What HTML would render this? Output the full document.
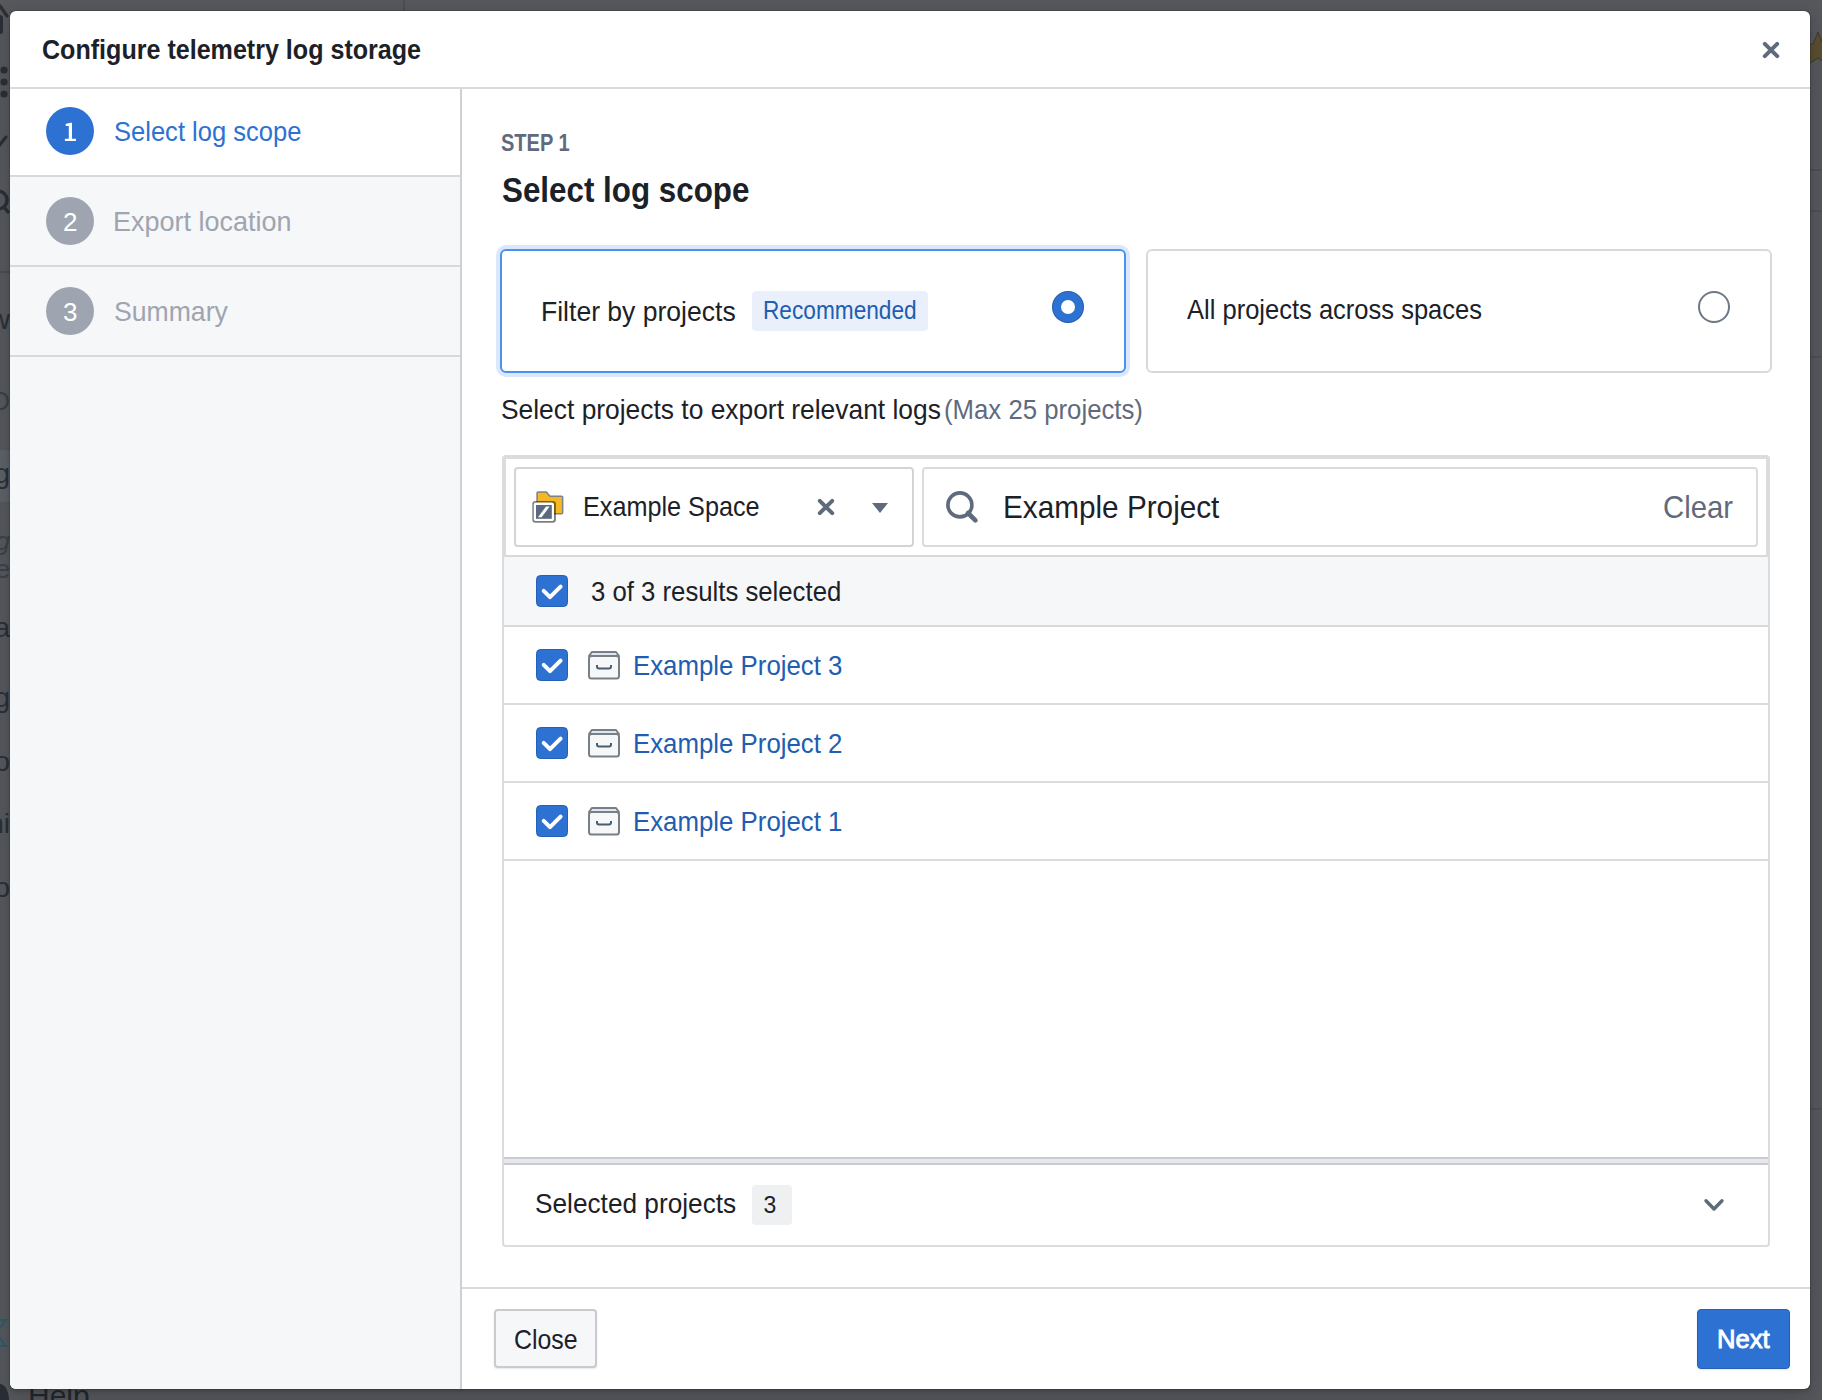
<!DOCTYPE html>
<html>
<head>
<meta charset="utf-8">
<style>
html,body{margin:0;padding:0;}
body{width:1822px;height:1400px;overflow:hidden;background:#56585c;position:relative;font-family:"Liberation Sans",sans-serif;}
.a{position:absolute;box-sizing:border-box;}
.t{position:absolute;white-space:nowrap;font-family:"Liberation Sans",sans-serif;}
svg{position:absolute;overflow:visible;}
</style>
</head>
<body>
<!-- backdrop hints -->
<div class="a" style="left:403px;top:0;width:2px;height:11px;background:#4c4e52"></div>
<div class="a" style="left:1810px;top:169px;width:12px;height:2px;background:#4d4f53"></div>
<div class="a" style="left:1810px;top:210px;width:12px;height:2px;background:#4d4f53"></div>
<div class="a" style="left:1810px;top:356px;width:12px;height:2px;background:#4d4f53"></div>
<div class="a" style="left:1810px;top:1108px;width:12px;height:2px;background:#4d4f53"></div>
<svg style="left:1798px;top:30px" width="40" height="36" viewBox="0 0 40 36"><path d="M20 2L25 14L38 15L28 23L31 35L20 28L9 35L12 23L2 15L15 14Z" fill="#5a4e30" stroke="#3e3829" stroke-width="1"/></svg>
<div class="a" style="left:0;top:271px;width:10px;height:2px;background:#4a4c50"></div>
<div class="a" style="left:0;top:450px;width:10px;height:52px;background:#5d6168"></div>
<svg style="left:-12px;top:0" width="22" height="240" viewBox="0 0 22 240">
 <rect x="0" y="15" width="15" height="19" rx="3" fill="#2b2f36"/><path d="M12 6L19 16" stroke="#2b2f36" stroke-width="3.2" stroke-linecap="round"/>
 <circle cx="16" cy="70" r="3.6" fill="#2b2f36"/><circle cx="16" cy="82" r="3.6" fill="#2b2f36"/><circle cx="16" cy="94" r="3.6" fill="#2b2f36"/>
 <path d="M10 147L18 137" stroke="#2b2f36" stroke-width="3" stroke-linecap="round"/>
 <circle cx="10" cy="200" r="9" stroke="#2b2f36" stroke-width="3.5" fill="none"/><path d="M16 207L20 212" stroke="#2b2f36" stroke-width="3.5" stroke-linecap="round"/>
</svg>
<div class="t" style="right:1812px;top:306px;font-size:28px;line-height:28px;color:#2b2f36">ow</div>
<div class="t" style="right:1812px;top:388px;font-size:26px;line-height:26px;color:#3b3f46">RO</div>
<div class="t" style="right:1812px;top:460px;font-size:28px;line-height:28px;color:#2b2f36">og</div>
<div class="t" style="right:1812px;top:528px;font-size:26px;line-height:26px;color:#3d4148;font-style:italic">ag</div>
<div class="t" style="right:1812px;top:556px;font-size:26px;line-height:26px;color:#3d4148">ce</div>
<div class="t" style="right:1812px;top:614px;font-size:28px;line-height:28px;color:#2b2f36">oa</div>
<div class="t" style="right:1812px;top:684px;font-size:28px;line-height:28px;color:#2b2f36">rg</div>
<div class="t" style="right:1812px;top:748px;font-size:28px;line-height:28px;color:#2b2f36">ro</div>
<div class="t" style="right:1812px;top:810px;font-size:28px;line-height:28px;color:#2b2f36">ni</div>
<div class="t" style="right:1812px;top:874px;font-size:28px;line-height:28px;color:#2b2f36">co</div>
<svg style="left:-10px;top:1318px" width="20" height="32" viewBox="0 0 20 32"><path d="M2 2H16L6 15L16 28H2" stroke="#2f5a6a" stroke-width="2" fill="none"/></svg>
<div class="a" style="left:-10px;top:1384px;width:19px;height:30px;border-radius:50%;background:#2a2f36"></div>
<div class="t" style="left:28px;top:1381px;font-size:30px;line-height:30px;color:#22262b">Help</div>

<!-- dialog -->
<div class="a" style="left:10px;top:11px;width:1800px;height:1378px;background:#fff;border-radius:6px;box-shadow:0 0 0 1px rgba(17,20,24,.15),0 2px 4px rgba(17,20,24,.2),0 8px 24px rgba(17,20,24,.2);overflow:hidden">
</div>

<!-- header divider -->
<div class="a" style="left:10px;top:87px;width:1800px;height:2px;background:#dbdbdc"></div>

<!-- close x -->
<svg style="left:1763px;top:42px" width="16" height="16" viewBox="0 0 16 16"><path d="M1.8 1.8L14.2 14.2M14.2 1.8L1.8 14.2" stroke="#5f6b7c" stroke-width="4" stroke-linecap="round" fill="none"/></svg>

<!-- sidebar -->
<div class="a" style="left:10px;top:89px;width:450px;height:1300px;background:#f6f7f9;border-bottom-left-radius:6px"></div>
<div class="a" style="left:10px;top:89px;width:450px;height:86px;background:#fff"></div>
<div class="a" style="left:10px;top:175px;width:450px;height:2px;background:#d8d9db"></div>
<div class="a" style="left:10px;top:265px;width:450px;height:2px;background:#d8d9db"></div>
<div class="a" style="left:10px;top:355px;width:450px;height:2px;background:#d8d9db"></div>
<div class="a" style="left:460px;top:89px;width:2px;height:1300px;background:#cfd0d3"></div>
<div class="a" style="left:46px;top:107px;width:48px;height:48px;border-radius:50%;background:#2d72d2"></div>
<div class="a" style="left:46px;top:197px;width:48px;height:48px;border-radius:50%;background:#9ea5b0"></div>
<div class="a" style="left:46px;top:287px;width:48px;height:48px;border-radius:50%;background:#9ea5b0"></div>

<!-- cards -->
<div class="a" style="left:500px;top:249px;width:626px;height:124px;border:2px solid #4c90f0;border-radius:6px;box-shadow:0 0 0 4px #dbe8fc;background:#fff"></div>
<div class="a" style="left:752px;top:291px;width:176px;height:40px;border-radius:4px;background:#eaf0fb"></div>
<div class="a" style="left:1052px;top:291px;width:32px;height:32px;border-radius:50%;background:#2d72d2;box-shadow:inset 0 0 0 1px rgba(17,20,24,.2)"></div>
<div class="a" style="left:1061px;top:300px;width:14px;height:14px;border-radius:50%;background:#fff"></div>
<div class="a" style="left:1146px;top:249px;width:626px;height:124px;border:2px solid #d9d9da;border-radius:6px;background:#fff"></div>
<div class="a" style="left:1698px;top:291px;width:32px;height:32px;border-radius:50%;border:2px solid #6d7886;background:#fff"></div>

<!-- table container -->
<div class="a" style="left:502px;top:455px;width:1268px;height:792px;border:2px solid #dcdcdd;border-radius:4px;background:#fff"></div>
<div class="a" style="left:504px;top:457px;width:1264px;height:100px;border:2px solid #dcdcdd;border-bottom-color:#d9d9d9"></div>
<!-- select -->
<div class="a" style="left:514px;top:467px;width:400px;height:80px;border:2px solid #d2d4d7;border-radius:4px;background:#fff"></div>
<div class="a" style="left:922px;top:467px;width:836px;height:80px;border:2px solid #dadbdc;border-radius:4px;background:#fff"></div>

<!-- folder icon -->
<svg style="left:532px;top:491px" width="32" height="32" viewBox="0 0 32 32">
 <path d="M4.3 2Q4.3 .3 6 .3H14.7L18.3 4.6H29.7Q31.4 4.6 31.4 6.3V21.7Q31.4 23.4 29.7 23.4H6Q4.3 23.4 4.3 21.7Z" fill="#7d8188"/>
 <path d="M5.8 1.8H14L17.6 6.1H29.9V21.9H5.8Z" fill="#f4b824"/>
 <rect x=".3" y="10" width="23.6" height="21.8" rx="3" fill="#000" fill-opacity=".5"/>
 <rect x="1.8" y="11.5" width="20.2" height="18.5" rx="1.8" fill="#fff"/>
 <rect x="4" y="14" width="15.8" height="13.8" fill="#5b6a80"/>
 <path d="M6 26.2H9.6L17.6 15.6H14Z" fill="#fff"/>
</svg>
<!-- select x -->
<svg style="left:818px;top:499px" width="16" height="16" viewBox="0 0 16 16"><path d="M1.8 1.8L14.2 14.2M14.2 1.8L1.8 14.2" stroke="#5f6b7c" stroke-width="4" stroke-linecap="round" fill="none"/></svg>
<!-- caret -->
<svg style="left:872px;top:503px" width="16" height="10" viewBox="0 0 16 10"><path d="M0 0H16L8 10Z" fill="#5f6b7c"/></svg>
<!-- search icon -->
<svg style="left:940px;top:485px" width="45" height="45" viewBox="0 0 45 45"><circle cx="19.9" cy="19.9" r="12" stroke="#5f6b7c" stroke-width="3.6" fill="none"/><path d="M28 28L35.4 35.4" stroke="#5f6b7c" stroke-width="4.6" stroke-linecap="round"/></svg>

<!-- results header row -->
<div class="a" style="left:504px;top:557px;width:1264px;height:68px;background:#f6f7f9"></div>
<div class="a" style="left:504px;top:625px;width:1264px;height:2px;background:#d8d9db"></div>
<div class="a" style="left:504px;top:703px;width:1264px;height:2px;background:#dcdcdd"></div>
<div class="a" style="left:504px;top:781px;width:1264px;height:2px;background:#dcdcdd"></div>
<div class="a" style="left:504px;top:859px;width:1264px;height:2px;background:#dcdcdd"></div>

<!-- checkboxes -->
<svg style="left:536px;top:575px" width="32" height="32" viewBox="0 0 32 32"><rect x=".5" y=".5" width="31" height="31" rx="4" fill="#2d72d2" stroke="#2460b5" stroke-width="1"/><path d="M7.7 15.9L14 22.2L24.6 11.6" stroke="#fff" stroke-width="4" stroke-linecap="round" stroke-linejoin="round" fill="none"/></svg>
<svg style="left:536px;top:649px" width="32" height="32" viewBox="0 0 32 32"><rect x=".5" y=".5" width="31" height="31" rx="4" fill="#2d72d2" stroke="#2460b5" stroke-width="1"/><path d="M7.7 15.9L14 22.2L24.6 11.6" stroke="#fff" stroke-width="4" stroke-linecap="round" stroke-linejoin="round" fill="none"/></svg>
<svg style="left:536px;top:727px" width="32" height="32" viewBox="0 0 32 32"><rect x=".5" y=".5" width="31" height="31" rx="4" fill="#2d72d2" stroke="#2460b5" stroke-width="1"/><path d="M7.7 15.9L14 22.2L24.6 11.6" stroke="#fff" stroke-width="4" stroke-linecap="round" stroke-linejoin="round" fill="none"/></svg>
<svg style="left:536px;top:805px" width="32" height="32" viewBox="0 0 32 32"><rect x=".5" y=".5" width="31" height="31" rx="4" fill="#2d72d2" stroke="#2460b5" stroke-width="1"/><path d="M7.7 15.9L14 22.2L24.6 11.6" stroke="#fff" stroke-width="4" stroke-linecap="round" stroke-linejoin="round" fill="none"/></svg>

<!-- project icons -->
<svg style="left:588px;top:651px" width="32" height="28" viewBox="0 0 32 28"><path d="M3.8 1H28L31 5H1Z" fill="#dde7f2" stroke="#7a7f85" stroke-width="2" stroke-linejoin="round"/><rect x="1" y="5" width="30" height="22.6" rx="2.5" fill="#f6f7f9" stroke="#7a7f85" stroke-width="2"/><path d="M9 14V15.5Q9 17.5 11 17.5H21Q23 17.5 23 15.5V14" stroke="#465d74" stroke-width="2" fill="none"/></svg>
<svg style="left:588px;top:729px" width="32" height="28" viewBox="0 0 32 28"><path d="M3.8 1H28L31 5H1Z" fill="#dde7f2" stroke="#7a7f85" stroke-width="2" stroke-linejoin="round"/><rect x="1" y="5" width="30" height="22.6" rx="2.5" fill="#f6f7f9" stroke="#7a7f85" stroke-width="2"/><path d="M9 14V15.5Q9 17.5 11 17.5H21Q23 17.5 23 15.5V14" stroke="#465d74" stroke-width="2" fill="none"/></svg>
<svg style="left:588px;top:807px" width="32" height="28" viewBox="0 0 32 28"><path d="M3.8 1H28L31 5H1Z" fill="#dde7f2" stroke="#7a7f85" stroke-width="2" stroke-linejoin="round"/><rect x="1" y="5" width="30" height="22.6" rx="2.5" fill="#f6f7f9" stroke="#7a7f85" stroke-width="2"/><path d="M9 14V15.5Q9 17.5 11 17.5H21Q23 17.5 23 15.5V14" stroke="#465d74" stroke-width="2" fill="none"/></svg>

<!-- splitter -->
<div class="a" style="left:504px;top:1157px;width:1264px;height:2px;background:#c8cbcf"></div>
<div class="a" style="left:504px;top:1159px;width:1264px;height:4px;background:#e6e8eb"></div>
<div class="a" style="left:504px;top:1163px;width:1264px;height:2px;background:#c8cbcf"></div>
<div class="a" style="left:752px;top:1185px;width:40px;height:40px;border-radius:4px;background:#eff0f2"></div>
<svg style="left:1702px;top:1197px" width="24" height="16" viewBox="0 0 24 16"><path d="M4 3.8L12 12L20 3.8" stroke="#5f6b7c" stroke-width="3.4" stroke-linecap="round" stroke-linejoin="round" fill="none"/></svg>

<!-- footer -->
<div class="a" style="left:462px;top:1287px;width:1348px;height:2px;background:#dbdbdc"></div>
<div class="a" style="left:494px;top:1309px;width:103px;height:59px;border:2px solid #c9cbcf;border-radius:4px;background:#f6f7f9;box-shadow:0 1px 2px rgba(17,20,24,.1)"></div>
<div class="a" style="left:1697px;top:1309px;width:93px;height:60px;border:1px solid #2560b3;border-radius:4px;background:#2d72d2;box-shadow:0 1px 2px rgba(17,20,24,.1)"></div>

<svg style="left:64px;top:122px" width="13" height="20" viewBox="0 0 13 20"><path d="M1.6 2.4Q1.6 1.7 3 1.4L6.6 .7H8V16.7H11.9V19H.9V16.7H4.8V4H2.4Q1.6 4 1.6 3.2Z" fill="#fff"/></svg>
<div id="t_title" class="t" style="left:42.3px;top:37.0px;font-size:27.0px;line-height:27.0px;font-weight:700;color:#1c2127;letter-spacing:0.000px;transform:scaleX(0.9288);transform-origin:0 0;">Configure telemetry log storage</div>
<div id="t_s1" class="t" style="left:114.4px;top:117.7px;font-size:27.6px;line-height:27.6px;font-weight:400;color:#2d72d2;letter-spacing:0.000px;transform:scaleX(0.9254);transform-origin:0 0;">Select log scope</div>
<div id="t_s2" class="t" style="left:112.9px;top:207.9px;font-size:27.6px;line-height:27.6px;font-weight:400;color:#9ea5b0;letter-spacing:0.000px;transform:scaleX(0.9782);transform-origin:0 0;">Export location</div>
<div id="t_s3" class="t" style="left:113.9px;top:298.4px;font-size:27.6px;line-height:27.6px;font-weight:400;color:#9ea5b0;letter-spacing:0.000px;transform:scaleX(0.9641);transform-origin:0 0;">Summary</div>
<div id="t_step" class="t" style="left:501.4px;top:132.2px;font-size:23.3px;line-height:23.3px;font-weight:700;color:#5f6b7c;letter-spacing:0.000px;transform:scaleX(0.8595);transform-origin:0 0;">STEP 1</div>
<div id="t_head" class="t" style="left:502.1px;top:173.2px;font-size:35.8px;line-height:35.8px;font-weight:700;color:#1c2127;letter-spacing:0.000px;transform:scaleX(0.8757);transform-origin:0 0;">Select log scope</div>
<div id="t_filter" class="t" style="left:540.9px;top:298.2px;font-size:28.0px;line-height:28.0px;font-weight:400;color:#1c2127;letter-spacing:0.000px;transform:scaleX(0.9478);transform-origin:0 0;">Filter by projects</div>
<div id="t_rec" class="t" style="left:762.9px;top:298.4px;font-size:25.6px;line-height:25.6px;font-weight:400;color:#215db0;letter-spacing:0.000px;transform:scaleX(0.8853);transform-origin:0 0;">Recommended</div>
<div id="t_all" class="t" style="left:1187.4px;top:296.4px;font-size:27.6px;line-height:27.6px;font-weight:400;color:#1c2127;letter-spacing:0.000px;transform:scaleX(0.9248);transform-origin:0 0;">All projects across spaces</div>
<div id="t_selp" class="t" style="left:501.2px;top:396.1px;font-size:27.6px;line-height:27.6px;font-weight:400;color:#1c2127;letter-spacing:0.000px;transform:scaleX(0.9559);transform-origin:0 0;">Select projects to export relevant logs</div>
<div id="t_max" class="t" style="left:944.2px;top:396.1px;font-size:27.6px;line-height:27.6px;font-weight:400;color:#5f6b7c;letter-spacing:0.000px;transform:scaleX(0.9333);transform-origin:0 0;">(Max 25 projects)</div>
<div id="t_space" class="t" style="left:583.1px;top:493.4px;font-size:27.6px;line-height:27.6px;font-weight:400;color:#1c2127;letter-spacing:0.000px;transform:scaleX(0.9137);transform-origin:0 0;">Example Space</div>
<div id="t_search" class="t" style="left:1002.6px;top:491.1px;font-size:32.0px;line-height:32.0px;font-weight:400;color:#1c2127;letter-spacing:0.000px;transform:scaleX(0.9287);transform-origin:0 0;">Example Project</div>
<div id="t_clear" class="t" style="left:1662.6px;top:490.9px;font-size:32.0px;line-height:32.0px;font-weight:400;color:#5f6b7c;letter-spacing:0.000px;transform:scaleX(0.9162);transform-origin:0 0;">Clear</div>
<div id="t_res" class="t" style="left:591.1px;top:578.0px;font-size:27.6px;line-height:27.6px;font-weight:400;color:#1c2127;letter-spacing:0.000px;transform:scaleX(0.9323);transform-origin:0 0;">3 of 3 results selected</div>
<div id="t_p3" class="t" style="left:632.7px;top:651.5px;font-size:27.6px;line-height:27.6px;font-weight:400;color:#215db0;letter-spacing:0.000px;transform:scaleX(0.9353);transform-origin:0 0;">Example Project 3</div>
<div id="t_p2" class="t" style="left:632.7px;top:729.5px;font-size:27.6px;line-height:27.6px;font-weight:400;color:#215db0;letter-spacing:0.000px;transform:scaleX(0.9353);transform-origin:0 0;">Example Project 2</div>
<div id="t_p1" class="t" style="left:632.7px;top:807.5px;font-size:27.6px;line-height:27.6px;font-weight:400;color:#215db0;letter-spacing:0.000px;transform:scaleX(0.9353);transform-origin:0 0;">Example Project 1</div>
<div id="t_selected" class="t" style="left:535.0px;top:1189.9px;font-size:27.6px;line-height:27.6px;font-weight:400;color:#1c2127;letter-spacing:0.000px;transform:scaleX(0.9505);transform-origin:0 0;">Selected projects</div>
<div id="t_cnt" class="t" style="left:763.4px;top:1193.6px;font-size:23.0px;line-height:23.0px;font-weight:400;color:#1c2127;letter-spacing:0.000px;">3</div>
<div id="t_close" class="t" style="left:513.5px;top:1325.9px;font-size:27.6px;line-height:27.6px;font-weight:400;color:#1c2127;letter-spacing:0.000px;transform:scaleX(0.9014);transform-origin:0 0;">Close</div>
<div id="t_next" class="t" style="left:1716.6px;top:1325.9px;font-size:26.6px;line-height:26.6px;font-weight:400;color:#ffffff;letter-spacing:0.000px;transform:scaleX(0.9642);transform-origin:0 0;-webkit-text-stroke:0.9px #ffffff;">Next</div>
<div id="t_n2" class="t" style="left:63.0px;top:208.7px;font-size:26.0px;line-height:26.0px;font-weight:400;color:#ffffff;letter-spacing:0.000px;">2</div>
<div id="t_n3" class="t" style="left:63.0px;top:298.7px;font-size:26.0px;line-height:26.0px;font-weight:400;color:#ffffff;letter-spacing:0.000px;">3</div>
</body>
</html>
